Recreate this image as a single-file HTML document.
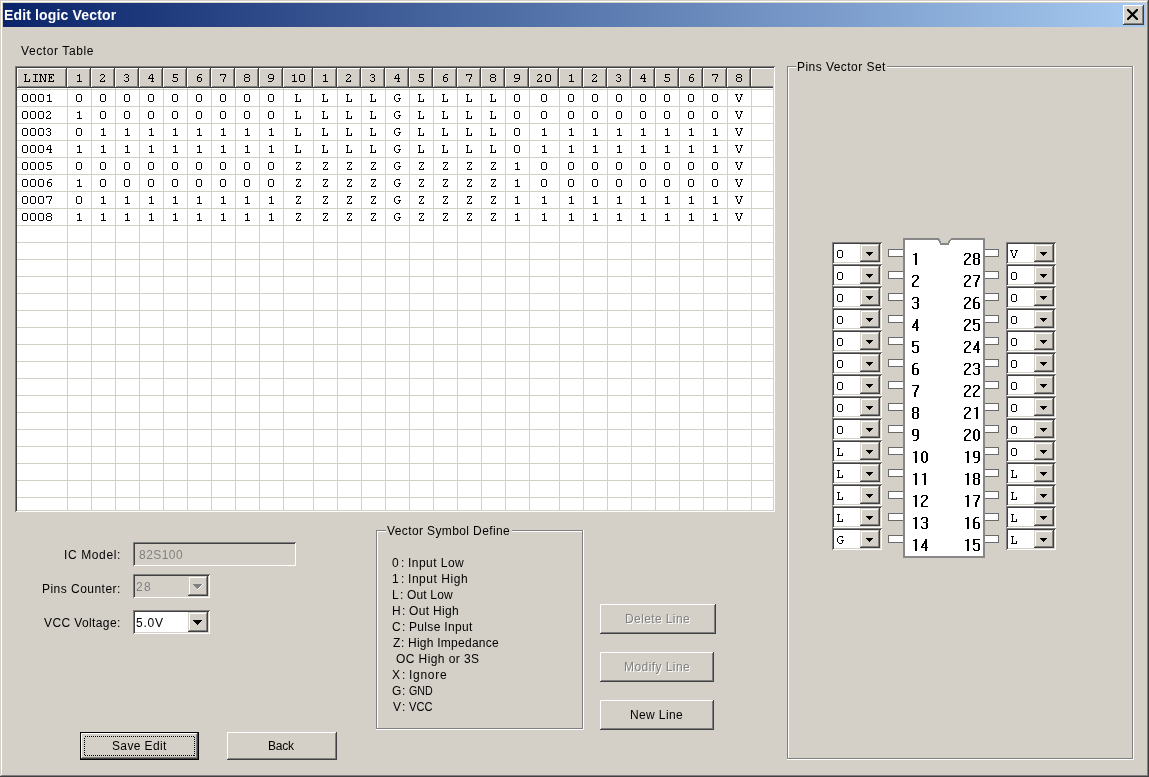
<!DOCTYPE html>
<html><head><meta charset="utf-8"><style>
html,body{margin:0;padding:0;}
body{width:1149px;height:777px;overflow:hidden;background:#D4D0C8;position:relative;font-family:"Liberation Sans",sans-serif;}
body div{position:absolute;}
.t{font-size:12px;line-height:15px;white-space:nowrap;color:#000;transform:translateZ(0);}
.tt{font-size:14px;font-weight:bold;color:#fff;line-height:20px;white-space:nowrap;letter-spacing:0.15px;transform:translateZ(0);}
.rz{background:#D4D0C8;box-shadow:inset -1px -1px #404040, inset 1px 1px #fff, inset -2px -2px #808080, inset 2px 2px #D4D0C8;}
.cb{background:#D4D0C8;box-shadow:inset -1px -1px #404040, inset 1px 1px #D4D0C8, inset -2px -2px #808080, inset 2px 2px #fff;}
.sk{box-shadow:inset 1px 1px #808080, inset -1px -1px #fff, inset 2px 2px #404040, inset -2px -2px #D4D0C8;}
.hd{background:#D4D0C8;box-shadow:inset -1px -1px #404040, inset 1px 1px #fff, inset -2px -2px #808080;}
</style></head><body>
<div style="left:0;top:0;width:1149px;height:777px;box-shadow:inset -1px -1px #404040, inset 1px 1px #D4D0C8, inset -2px -2px #808080, inset 2px 2px #fff"></div>
<div style="left:3px;top:3px;width:1143px;height:24px;background:linear-gradient(to right,#0A246A,#A6CAF0)"></div>
<div class="tt" style="left:4px;top:5px">Edit logic Vector</div>
<div class="rz" style="left:1123px;top:5px;width:21px;height:20px"></div>
<svg style="position:absolute;left:1127px;top:9px" width="11" height="11"><path d="M1 1L10 10M10 1L1 10" stroke="#000" stroke-width="2.2" stroke-linecap="square"/></svg>
<div class="t" style="left:21px;top:44px;letter-spacing:0.603px;color:#000;">Vector Table</div>
<div class="sk" style="left:15px;top:66px;width:760px;height:446px;background:#fff"></div>
<div class="hd" style="left:17px;top:68px;width:50px;height:20px"></div>
<div class="hd" style="left:67px;top:68px;width:24px;height:20px"></div>
<div class="hd" style="left:91px;top:68px;width:24px;height:20px"></div>
<div class="hd" style="left:115px;top:68px;width:24px;height:20px"></div>
<div class="hd" style="left:139px;top:68px;width:24px;height:20px"></div>
<div class="hd" style="left:163px;top:68px;width:24px;height:20px"></div>
<div class="hd" style="left:187px;top:68px;width:24px;height:20px"></div>
<div class="hd" style="left:211px;top:68px;width:24px;height:20px"></div>
<div class="hd" style="left:235px;top:68px;width:24px;height:20px"></div>
<div class="hd" style="left:259px;top:68px;width:24px;height:20px"></div>
<div class="hd" style="left:283px;top:68px;width:30px;height:20px"></div>
<div class="hd" style="left:313px;top:68px;width:24px;height:20px"></div>
<div class="hd" style="left:337px;top:68px;width:24px;height:20px"></div>
<div class="hd" style="left:361px;top:68px;width:24px;height:20px"></div>
<div class="hd" style="left:385px;top:68px;width:24px;height:20px"></div>
<div class="hd" style="left:409px;top:68px;width:24px;height:20px"></div>
<div class="hd" style="left:433px;top:68px;width:24px;height:20px"></div>
<div class="hd" style="left:457px;top:68px;width:24px;height:20px"></div>
<div class="hd" style="left:481px;top:68px;width:24px;height:20px"></div>
<div class="hd" style="left:505px;top:68px;width:24px;height:20px"></div>
<div class="hd" style="left:529px;top:68px;width:30px;height:20px"></div>
<div class="hd" style="left:559px;top:68px;width:24px;height:20px"></div>
<div class="hd" style="left:583px;top:68px;width:24px;height:20px"></div>
<div class="hd" style="left:607px;top:68px;width:24px;height:20px"></div>
<div class="hd" style="left:631px;top:68px;width:24px;height:20px"></div>
<div class="hd" style="left:655px;top:68px;width:24px;height:20px"></div>
<div class="hd" style="left:679px;top:68px;width:24px;height:20px"></div>
<div class="hd" style="left:703px;top:68px;width:24px;height:20px"></div>
<div class="hd" style="left:727px;top:68px;width:24px;height:20px"></div>
<div style="left:751px;top:68px;width:22px;height:20px;background:#D4D0C8;box-shadow:inset 0 -1px #404040, inset 0 -2px #808080, inset 1px 1px #fff"></div>
<div style="left:17px;top:89px;width:756px;height:1px;background:#D4D0C8;"></div>
<div style="left:17px;top:106px;width:756px;height:1px;background:#D4D0C8;"></div>
<div style="left:17px;top:123px;width:756px;height:1px;background:#D4D0C8;"></div>
<div style="left:17px;top:140px;width:756px;height:1px;background:#D4D0C8;"></div>
<div style="left:17px;top:157px;width:756px;height:1px;background:#D4D0C8;"></div>
<div style="left:17px;top:174px;width:756px;height:1px;background:#D4D0C8;"></div>
<div style="left:17px;top:191px;width:756px;height:1px;background:#D4D0C8;"></div>
<div style="left:17px;top:208px;width:756px;height:1px;background:#D4D0C8;"></div>
<div style="left:17px;top:225px;width:756px;height:1px;background:#D4D0C8;"></div>
<div style="left:17px;top:242px;width:756px;height:1px;background:#D4D0C8;"></div>
<div style="left:17px;top:259px;width:756px;height:1px;background:#D4D0C8;"></div>
<div style="left:17px;top:276px;width:756px;height:1px;background:#D4D0C8;"></div>
<div style="left:17px;top:293px;width:756px;height:1px;background:#D4D0C8;"></div>
<div style="left:17px;top:310px;width:756px;height:1px;background:#D4D0C8;"></div>
<div style="left:17px;top:327px;width:756px;height:1px;background:#D4D0C8;"></div>
<div style="left:17px;top:344px;width:756px;height:1px;background:#D4D0C8;"></div>
<div style="left:17px;top:361px;width:756px;height:1px;background:#D4D0C8;"></div>
<div style="left:17px;top:378px;width:756px;height:1px;background:#D4D0C8;"></div>
<div style="left:17px;top:395px;width:756px;height:1px;background:#D4D0C8;"></div>
<div style="left:17px;top:412px;width:756px;height:1px;background:#D4D0C8;"></div>
<div style="left:17px;top:429px;width:756px;height:1px;background:#D4D0C8;"></div>
<div style="left:17px;top:446px;width:756px;height:1px;background:#D4D0C8;"></div>
<div style="left:17px;top:463px;width:756px;height:1px;background:#D4D0C8;"></div>
<div style="left:17px;top:480px;width:756px;height:1px;background:#D4D0C8;"></div>
<div style="left:17px;top:497px;width:756px;height:1px;background:#D4D0C8;"></div>
<div style="left:67px;top:88px;width:1px;height:422px;background:#D4D0C8;"></div>
<div style="left:91px;top:88px;width:1px;height:422px;background:#D4D0C8;"></div>
<div style="left:115px;top:88px;width:1px;height:422px;background:#D4D0C8;"></div>
<div style="left:139px;top:88px;width:1px;height:422px;background:#D4D0C8;"></div>
<div style="left:163px;top:88px;width:1px;height:422px;background:#D4D0C8;"></div>
<div style="left:187px;top:88px;width:1px;height:422px;background:#D4D0C8;"></div>
<div style="left:211px;top:88px;width:1px;height:422px;background:#D4D0C8;"></div>
<div style="left:235px;top:88px;width:1px;height:422px;background:#D4D0C8;"></div>
<div style="left:259px;top:88px;width:1px;height:422px;background:#D4D0C8;"></div>
<div style="left:283px;top:88px;width:1px;height:422px;background:#D4D0C8;"></div>
<div style="left:313px;top:88px;width:1px;height:422px;background:#D4D0C8;"></div>
<div style="left:337px;top:88px;width:1px;height:422px;background:#D4D0C8;"></div>
<div style="left:361px;top:88px;width:1px;height:422px;background:#D4D0C8;"></div>
<div style="left:385px;top:88px;width:1px;height:422px;background:#D4D0C8;"></div>
<div style="left:409px;top:88px;width:1px;height:422px;background:#D4D0C8;"></div>
<div style="left:433px;top:88px;width:1px;height:422px;background:#D4D0C8;"></div>
<div style="left:457px;top:88px;width:1px;height:422px;background:#D4D0C8;"></div>
<div style="left:481px;top:88px;width:1px;height:422px;background:#D4D0C8;"></div>
<div style="left:505px;top:88px;width:1px;height:422px;background:#D4D0C8;"></div>
<div style="left:529px;top:88px;width:1px;height:422px;background:#D4D0C8;"></div>
<div style="left:559px;top:88px;width:1px;height:422px;background:#D4D0C8;"></div>
<div style="left:583px;top:88px;width:1px;height:422px;background:#D4D0C8;"></div>
<div style="left:607px;top:88px;width:1px;height:422px;background:#D4D0C8;"></div>
<div style="left:631px;top:88px;width:1px;height:422px;background:#D4D0C8;"></div>
<div style="left:655px;top:88px;width:1px;height:422px;background:#D4D0C8;"></div>
<div style="left:679px;top:88px;width:1px;height:422px;background:#D4D0C8;"></div>
<div style="left:703px;top:88px;width:1px;height:422px;background:#D4D0C8;"></div>
<div style="left:727px;top:88px;width:1px;height:422px;background:#D4D0C8;"></div>
<div style="left:751px;top:88px;width:1px;height:422px;background:#D4D0C8;"></div>
<div class="t" style="left:64px;top:548px;letter-spacing:0.623px;color:#000;">IC Model:</div>
<div class="t" style="left:42px;top:582px;letter-spacing:0.47px;color:#000;">Pins Counter:</div>
<div class="t" style="left:44px;top:616px;letter-spacing:0.39px;color:#000;">VCC Voltage:</div>
<div class="sk" style="left:133px;top:542px;width:163px;height:24px;background:#D4D0C8"></div>
<div class="t" style="left:139px;top:548px;letter-spacing:0.46px;color:#808080;">82S100</div>
<div class="sk" style="left:133px;top:574px;width:77px;height:24px;background:#D4D0C8"></div>
<div class="cb" style="left:188px;top:576px;width:20px;height:20px"></div>
<svg style="position:absolute;left:193px;top:584px" width="10" height="6" shape-rendering="crispEdges"><path d="M9 0h1v1h-1zM8 1h1v1h-1zM7 2h1v1h-1zM6 3h1v1h-1zM5 4h1v1h-1zM4 5h1v1h-1z" fill="#fff"/></svg>
<svg style="position:absolute;left:193px;top:584px" width="9" height="5" shape-rendering="crispEdges"><path d="M0 0h9v1h-9zM1 1h7v1h-7zM2 2h5v1h-5zM3 3h3v1h-3zM4 4h1v1h-1z" fill="#808080"/></svg>
<div class="t" style="left:136px;top:580px;letter-spacing:1.326px;color:#808080;">28</div>
<div class="sk" style="left:133px;top:610px;width:77px;height:24px;background:#fff"></div>
<div class="cb" style="left:188px;top:612px;width:20px;height:20px"></div>
<svg style="position:absolute;left:193px;top:620px" width="9" height="5" shape-rendering="crispEdges"><path d="M0 0h9v1h-9zM1 1h7v1h-7zM2 2h5v1h-5zM3 3h3v1h-3zM4 4h1v1h-1z" fill="#000"/></svg>
<div class="t" style="left:136px;top:616px;letter-spacing:0.772px;color:#000;">5.0V</div>
<div style="left:376px;top:530px;width:208px;height:200px;box-shadow:inset -1px -1px #fff, inset 1px 1px #808080, inset -2px -2px #808080, inset 2px 2px #fff"></div>
<div style="left:386px;top:526px;width:126px;height:10px;background:#D4D0C8"></div>
<div class="t" style="left:387px;top:524px;letter-spacing:0.384px;color:#000;">Vector Symbol Define</div>
<div class="t" style="left:392px;top:556px;letter-spacing:0px;color:#000;">0</div>
<div class="t" style="left:401px;top:556px;letter-spacing:0px;color:#000;">:</div>
<div class="t" style="left:408px;top:556px;letter-spacing:0.454px;color:#000;">Input Low</div>
<div class="t" style="left:392px;top:572px;letter-spacing:0px;color:#000;">1</div>
<div class="t" style="left:401px;top:572px;letter-spacing:0px;color:#000;">:</div>
<div class="t" style="left:408px;top:572px;letter-spacing:0.552px;color:#000;">Input High</div>
<div class="t" style="left:392px;top:588px;letter-spacing:0px;color:#000;">L</div>
<div class="t" style="left:400px;top:588px;letter-spacing:0px;color:#000;">:</div>
<div class="t" style="left:407px;top:588px;letter-spacing:0.163px;color:#000;">Out Low</div>
<div class="t" style="left:392px;top:604px;letter-spacing:0px;color:#000;">H</div>
<div class="t" style="left:402px;top:604px;letter-spacing:0px;color:#000;">:</div>
<div class="t" style="left:409px;top:604px;letter-spacing:0.331px;color:#000;">Out High</div>
<div class="t" style="left:392px;top:620px;letter-spacing:0px;color:#000;">C</div>
<div class="t" style="left:402px;top:620px;letter-spacing:0px;color:#000;">:</div>
<div class="t" style="left:409px;top:620px;letter-spacing:0.329px;color:#000;">Pulse Input</div>
<div class="t" style="left:393px;top:636px;letter-spacing:0px;color:#000;">Z</div>
<div class="t" style="left:401px;top:636px;letter-spacing:0px;color:#000;">:</div>
<div class="t" style="left:408px;top:636px;letter-spacing:0.253px;color:#000;">High Impedance</div>
<div class="t" style="left:396px;top:652px;letter-spacing:0.415px;color:#000;">OC High or 3S</div>
<div class="t" style="left:392px;top:668px;letter-spacing:0px;color:#000;">X</div>
<div class="t" style="left:402px;top:668px;letter-spacing:0px;color:#000;">:</div>
<div class="t" style="left:409px;top:668px;letter-spacing:0.73px;color:#000;">Ignore</div>
<div class="t" style="left:392px;top:684px;letter-spacing:0px;color:#000;">G</div>
<div class="t" style="left:402px;top:684px;letter-spacing:0px;color:#000;">:</div>
<div class="t" style="left:409px;top:684px;letter-spacing:0px;color:#000;transform:translateZ(0) scaleX(0.889);transform-origin:0 0">GND</div>
<div class="t" style="left:393px;top:700px;letter-spacing:0px;color:#000;">V</div>
<div class="t" style="left:402px;top:700px;letter-spacing:0px;color:#000;">:</div>
<div class="t" style="left:409px;top:700px;letter-spacing:0px;color:#000;transform:translateZ(0) scaleX(0.927);transform-origin:0 0">VCC</div>
<div class="rz" style="left:600px;top:604px;width:116px;height:30px"></div>
<div class="t" style="left:626px;top:613px;letter-spacing:0.396px;color:#fff;">Delete Line</div>
<div class="t" style="left:625px;top:612px;letter-spacing:0.396px;color:#808080;">Delete Line</div>
<div class="rz" style="left:600px;top:652px;width:114px;height:30px"></div>
<div class="t" style="left:625px;top:661px;letter-spacing:0.431px;color:#fff;">Modify Line</div>
<div class="t" style="left:624px;top:660px;letter-spacing:0.431px;color:#808080;">Modify Line</div>
<div class="rz" style="left:600px;top:700px;width:114px;height:30px"></div>
<div class="t" style="left:630px;top:708px;letter-spacing:0.378px;color:#000;">New Line</div>
<div style="left:80px;top:732px;width:119px;height:28px;background:#D4D0C8;box-shadow:inset -1px -1px #000, inset 1px 1px #000, inset -2px -2px #404040, inset 2px 2px #fff, inset -3px -3px #808080"></div>
<svg style="position:absolute;left:84px;top:736px" width="111" height="20" shape-rendering="crispEdges"><rect x="0.5" y="0.5" width="110" height="19" fill="none" stroke="#000" stroke-dasharray="1 1"/></svg>
<div class="t" style="left:112px;top:739px;letter-spacing:0.371px;color:#000;">Save Edit</div>
<div class="rz" style="left:227px;top:732px;width:110px;height:28px"></div>
<div class="t" style="left:268px;top:739px;letter-spacing:-0.226px;color:#000;">Back</div>
<div style="left:787px;top:66px;width:347px;height:694px;box-shadow:inset -1px -1px #fff, inset 1px 1px #808080, inset -2px -2px #808080, inset 2px 2px #fff"></div>
<div style="left:796px;top:62px;width:91px;height:10px;background:#D4D0C8"></div>
<div class="t" style="left:797px;top:60px;letter-spacing:0.45px;color:#000;">Pins Vector Set</div>
<div class="sk" style="left:832px;top:242px;width:50px;height:22px;background:#fff"></div>
<div class="cb" style="left:860px;top:244px;width:20px;height:18px"></div>
<svg style="position:absolute;left:866px;top:252px" width="7" height="4" shape-rendering="crispEdges"><path d="M0 0h7v1h-7zM1 1h5v1h-5zM2 2h3v1h-3zM3 3h1v1h-1z" fill="#000"/></svg>
<div class="sk" style="left:1006px;top:242px;width:50px;height:22px;background:#fff"></div>
<div class="cb" style="left:1034px;top:244px;width:20px;height:18px"></div>
<svg style="position:absolute;left:1040px;top:252px" width="7" height="4" shape-rendering="crispEdges"><path d="M0 0h7v1h-7zM1 1h5v1h-5zM2 2h3v1h-3zM3 3h1v1h-1z" fill="#000"/></svg>
<div class="sk" style="left:832px;top:264px;width:50px;height:22px;background:#fff"></div>
<div class="cb" style="left:860px;top:266px;width:20px;height:18px"></div>
<svg style="position:absolute;left:866px;top:274px" width="7" height="4" shape-rendering="crispEdges"><path d="M0 0h7v1h-7zM1 1h5v1h-5zM2 2h3v1h-3zM3 3h1v1h-1z" fill="#000"/></svg>
<div class="sk" style="left:1006px;top:264px;width:50px;height:22px;background:#fff"></div>
<div class="cb" style="left:1034px;top:266px;width:20px;height:18px"></div>
<svg style="position:absolute;left:1040px;top:274px" width="7" height="4" shape-rendering="crispEdges"><path d="M0 0h7v1h-7zM1 1h5v1h-5zM2 2h3v1h-3zM3 3h1v1h-1z" fill="#000"/></svg>
<div class="sk" style="left:832px;top:286px;width:50px;height:22px;background:#fff"></div>
<div class="cb" style="left:860px;top:288px;width:20px;height:18px"></div>
<svg style="position:absolute;left:866px;top:296px" width="7" height="4" shape-rendering="crispEdges"><path d="M0 0h7v1h-7zM1 1h5v1h-5zM2 2h3v1h-3zM3 3h1v1h-1z" fill="#000"/></svg>
<div class="sk" style="left:1006px;top:286px;width:50px;height:22px;background:#fff"></div>
<div class="cb" style="left:1034px;top:288px;width:20px;height:18px"></div>
<svg style="position:absolute;left:1040px;top:296px" width="7" height="4" shape-rendering="crispEdges"><path d="M0 0h7v1h-7zM1 1h5v1h-5zM2 2h3v1h-3zM3 3h1v1h-1z" fill="#000"/></svg>
<div class="sk" style="left:832px;top:308px;width:50px;height:22px;background:#fff"></div>
<div class="cb" style="left:860px;top:310px;width:20px;height:18px"></div>
<svg style="position:absolute;left:866px;top:318px" width="7" height="4" shape-rendering="crispEdges"><path d="M0 0h7v1h-7zM1 1h5v1h-5zM2 2h3v1h-3zM3 3h1v1h-1z" fill="#000"/></svg>
<div class="sk" style="left:1006px;top:308px;width:50px;height:22px;background:#fff"></div>
<div class="cb" style="left:1034px;top:310px;width:20px;height:18px"></div>
<svg style="position:absolute;left:1040px;top:318px" width="7" height="4" shape-rendering="crispEdges"><path d="M0 0h7v1h-7zM1 1h5v1h-5zM2 2h3v1h-3zM3 3h1v1h-1z" fill="#000"/></svg>
<div class="sk" style="left:832px;top:330px;width:50px;height:22px;background:#fff"></div>
<div class="cb" style="left:860px;top:332px;width:20px;height:18px"></div>
<svg style="position:absolute;left:866px;top:340px" width="7" height="4" shape-rendering="crispEdges"><path d="M0 0h7v1h-7zM1 1h5v1h-5zM2 2h3v1h-3zM3 3h1v1h-1z" fill="#000"/></svg>
<div class="sk" style="left:1006px;top:330px;width:50px;height:22px;background:#fff"></div>
<div class="cb" style="left:1034px;top:332px;width:20px;height:18px"></div>
<svg style="position:absolute;left:1040px;top:340px" width="7" height="4" shape-rendering="crispEdges"><path d="M0 0h7v1h-7zM1 1h5v1h-5zM2 2h3v1h-3zM3 3h1v1h-1z" fill="#000"/></svg>
<div class="sk" style="left:832px;top:352px;width:50px;height:22px;background:#fff"></div>
<div class="cb" style="left:860px;top:354px;width:20px;height:18px"></div>
<svg style="position:absolute;left:866px;top:362px" width="7" height="4" shape-rendering="crispEdges"><path d="M0 0h7v1h-7zM1 1h5v1h-5zM2 2h3v1h-3zM3 3h1v1h-1z" fill="#000"/></svg>
<div class="sk" style="left:1006px;top:352px;width:50px;height:22px;background:#fff"></div>
<div class="cb" style="left:1034px;top:354px;width:20px;height:18px"></div>
<svg style="position:absolute;left:1040px;top:362px" width="7" height="4" shape-rendering="crispEdges"><path d="M0 0h7v1h-7zM1 1h5v1h-5zM2 2h3v1h-3zM3 3h1v1h-1z" fill="#000"/></svg>
<div class="sk" style="left:832px;top:374px;width:50px;height:22px;background:#fff"></div>
<div class="cb" style="left:860px;top:376px;width:20px;height:18px"></div>
<svg style="position:absolute;left:866px;top:384px" width="7" height="4" shape-rendering="crispEdges"><path d="M0 0h7v1h-7zM1 1h5v1h-5zM2 2h3v1h-3zM3 3h1v1h-1z" fill="#000"/></svg>
<div class="sk" style="left:1006px;top:374px;width:50px;height:22px;background:#fff"></div>
<div class="cb" style="left:1034px;top:376px;width:20px;height:18px"></div>
<svg style="position:absolute;left:1040px;top:384px" width="7" height="4" shape-rendering="crispEdges"><path d="M0 0h7v1h-7zM1 1h5v1h-5zM2 2h3v1h-3zM3 3h1v1h-1z" fill="#000"/></svg>
<div class="sk" style="left:832px;top:396px;width:50px;height:22px;background:#fff"></div>
<div class="cb" style="left:860px;top:398px;width:20px;height:18px"></div>
<svg style="position:absolute;left:866px;top:406px" width="7" height="4" shape-rendering="crispEdges"><path d="M0 0h7v1h-7zM1 1h5v1h-5zM2 2h3v1h-3zM3 3h1v1h-1z" fill="#000"/></svg>
<div class="sk" style="left:1006px;top:396px;width:50px;height:22px;background:#fff"></div>
<div class="cb" style="left:1034px;top:398px;width:20px;height:18px"></div>
<svg style="position:absolute;left:1040px;top:406px" width="7" height="4" shape-rendering="crispEdges"><path d="M0 0h7v1h-7zM1 1h5v1h-5zM2 2h3v1h-3zM3 3h1v1h-1z" fill="#000"/></svg>
<div class="sk" style="left:832px;top:418px;width:50px;height:22px;background:#fff"></div>
<div class="cb" style="left:860px;top:420px;width:20px;height:18px"></div>
<svg style="position:absolute;left:866px;top:428px" width="7" height="4" shape-rendering="crispEdges"><path d="M0 0h7v1h-7zM1 1h5v1h-5zM2 2h3v1h-3zM3 3h1v1h-1z" fill="#000"/></svg>
<div class="sk" style="left:1006px;top:418px;width:50px;height:22px;background:#fff"></div>
<div class="cb" style="left:1034px;top:420px;width:20px;height:18px"></div>
<svg style="position:absolute;left:1040px;top:428px" width="7" height="4" shape-rendering="crispEdges"><path d="M0 0h7v1h-7zM1 1h5v1h-5zM2 2h3v1h-3zM3 3h1v1h-1z" fill="#000"/></svg>
<div class="sk" style="left:832px;top:440px;width:50px;height:22px;background:#fff"></div>
<div class="cb" style="left:860px;top:442px;width:20px;height:18px"></div>
<svg style="position:absolute;left:866px;top:450px" width="7" height="4" shape-rendering="crispEdges"><path d="M0 0h7v1h-7zM1 1h5v1h-5zM2 2h3v1h-3zM3 3h1v1h-1z" fill="#000"/></svg>
<div class="sk" style="left:1006px;top:440px;width:50px;height:22px;background:#fff"></div>
<div class="cb" style="left:1034px;top:442px;width:20px;height:18px"></div>
<svg style="position:absolute;left:1040px;top:450px" width="7" height="4" shape-rendering="crispEdges"><path d="M0 0h7v1h-7zM1 1h5v1h-5zM2 2h3v1h-3zM3 3h1v1h-1z" fill="#000"/></svg>
<div class="sk" style="left:832px;top:462px;width:50px;height:22px;background:#fff"></div>
<div class="cb" style="left:860px;top:464px;width:20px;height:18px"></div>
<svg style="position:absolute;left:866px;top:472px" width="7" height="4" shape-rendering="crispEdges"><path d="M0 0h7v1h-7zM1 1h5v1h-5zM2 2h3v1h-3zM3 3h1v1h-1z" fill="#000"/></svg>
<div class="sk" style="left:1006px;top:462px;width:50px;height:22px;background:#fff"></div>
<div class="cb" style="left:1034px;top:464px;width:20px;height:18px"></div>
<svg style="position:absolute;left:1040px;top:472px" width="7" height="4" shape-rendering="crispEdges"><path d="M0 0h7v1h-7zM1 1h5v1h-5zM2 2h3v1h-3zM3 3h1v1h-1z" fill="#000"/></svg>
<div class="sk" style="left:832px;top:484px;width:50px;height:22px;background:#fff"></div>
<div class="cb" style="left:860px;top:486px;width:20px;height:18px"></div>
<svg style="position:absolute;left:866px;top:494px" width="7" height="4" shape-rendering="crispEdges"><path d="M0 0h7v1h-7zM1 1h5v1h-5zM2 2h3v1h-3zM3 3h1v1h-1z" fill="#000"/></svg>
<div class="sk" style="left:1006px;top:484px;width:50px;height:22px;background:#fff"></div>
<div class="cb" style="left:1034px;top:486px;width:20px;height:18px"></div>
<svg style="position:absolute;left:1040px;top:494px" width="7" height="4" shape-rendering="crispEdges"><path d="M0 0h7v1h-7zM1 1h5v1h-5zM2 2h3v1h-3zM3 3h1v1h-1z" fill="#000"/></svg>
<div class="sk" style="left:832px;top:506px;width:50px;height:22px;background:#fff"></div>
<div class="cb" style="left:860px;top:508px;width:20px;height:18px"></div>
<svg style="position:absolute;left:866px;top:516px" width="7" height="4" shape-rendering="crispEdges"><path d="M0 0h7v1h-7zM1 1h5v1h-5zM2 2h3v1h-3zM3 3h1v1h-1z" fill="#000"/></svg>
<div class="sk" style="left:1006px;top:506px;width:50px;height:22px;background:#fff"></div>
<div class="cb" style="left:1034px;top:508px;width:20px;height:18px"></div>
<svg style="position:absolute;left:1040px;top:516px" width="7" height="4" shape-rendering="crispEdges"><path d="M0 0h7v1h-7zM1 1h5v1h-5zM2 2h3v1h-3zM3 3h1v1h-1z" fill="#000"/></svg>
<div class="sk" style="left:832px;top:528px;width:50px;height:22px;background:#fff"></div>
<div class="cb" style="left:860px;top:530px;width:20px;height:18px"></div>
<svg style="position:absolute;left:866px;top:538px" width="7" height="4" shape-rendering="crispEdges"><path d="M0 0h7v1h-7zM1 1h5v1h-5zM2 2h3v1h-3zM3 3h1v1h-1z" fill="#000"/></svg>
<div class="sk" style="left:1006px;top:528px;width:50px;height:22px;background:#fff"></div>
<div class="cb" style="left:1034px;top:530px;width:20px;height:18px"></div>
<svg style="position:absolute;left:1040px;top:538px" width="7" height="4" shape-rendering="crispEdges"><path d="M0 0h7v1h-7zM1 1h5v1h-5zM2 2h3v1h-3zM3 3h1v1h-1z" fill="#000"/></svg>
<svg style="position:absolute;left:0;top:0" width="1149" height="777" shape-rendering="crispEdges"><rect x="903" y="238" width="82" height="320" fill="#878787"/><rect x="905" y="240" width="78" height="316" fill="#fff"/><rect x="939" y="238" width="12" height="1" fill="#D4D0C8"/><rect x="939" y="239" width="1" height="1" fill="#878787"/><rect x="940" y="239" width="10" height="1" fill="#D4D0C8"/><rect x="950" y="239" width="1" height="1" fill="#878787"/><rect x="938" y="240" width="2" height="1" fill="#878787"/><rect x="940" y="240" width="9" height="1" fill="#D4D0C8"/><rect x="949" y="240" width="2" height="1" fill="#878787"/><rect x="939" y="241" width="2" height="1" fill="#878787"/><rect x="941" y="241" width="7" height="1" fill="#D4D0C8"/><rect x="948" y="241" width="2" height="1" fill="#878787"/><rect x="939" y="242" width="2" height="1" fill="#878787"/><rect x="941" y="242" width="7" height="1" fill="#D4D0C8"/><rect x="948" y="242" width="2" height="1" fill="#878787"/><rect x="940" y="243" width="9" height="1" fill="#878787"/><rect x="940" y="244" width="9" height="1" fill="#878787"/><rect x="888" y="249" width="15" height="8" fill="#6a6a6a"/><rect x="889" y="250" width="14" height="6" fill="#fff"/><rect x="985" y="249" width="14" height="8" fill="#6a6a6a"/><rect x="985" y="250" width="13" height="6" fill="#fff"/><rect x="888" y="271" width="15" height="8" fill="#6a6a6a"/><rect x="889" y="272" width="14" height="6" fill="#fff"/><rect x="985" y="271" width="14" height="8" fill="#6a6a6a"/><rect x="985" y="272" width="13" height="6" fill="#fff"/><rect x="888" y="293" width="15" height="8" fill="#6a6a6a"/><rect x="889" y="294" width="14" height="6" fill="#fff"/><rect x="985" y="293" width="14" height="8" fill="#6a6a6a"/><rect x="985" y="294" width="13" height="6" fill="#fff"/><rect x="888" y="315" width="15" height="8" fill="#6a6a6a"/><rect x="889" y="316" width="14" height="6" fill="#fff"/><rect x="985" y="315" width="14" height="8" fill="#6a6a6a"/><rect x="985" y="316" width="13" height="6" fill="#fff"/><rect x="888" y="337" width="15" height="8" fill="#6a6a6a"/><rect x="889" y="338" width="14" height="6" fill="#fff"/><rect x="985" y="337" width="14" height="8" fill="#6a6a6a"/><rect x="985" y="338" width="13" height="6" fill="#fff"/><rect x="888" y="359" width="15" height="8" fill="#6a6a6a"/><rect x="889" y="360" width="14" height="6" fill="#fff"/><rect x="985" y="359" width="14" height="8" fill="#6a6a6a"/><rect x="985" y="360" width="13" height="6" fill="#fff"/><rect x="888" y="381" width="15" height="8" fill="#6a6a6a"/><rect x="889" y="382" width="14" height="6" fill="#fff"/><rect x="985" y="381" width="14" height="8" fill="#6a6a6a"/><rect x="985" y="382" width="13" height="6" fill="#fff"/><rect x="888" y="403" width="15" height="8" fill="#6a6a6a"/><rect x="889" y="404" width="14" height="6" fill="#fff"/><rect x="985" y="403" width="14" height="8" fill="#6a6a6a"/><rect x="985" y="404" width="13" height="6" fill="#fff"/><rect x="888" y="425" width="15" height="8" fill="#6a6a6a"/><rect x="889" y="426" width="14" height="6" fill="#fff"/><rect x="985" y="425" width="14" height="8" fill="#6a6a6a"/><rect x="985" y="426" width="13" height="6" fill="#fff"/><rect x="888" y="447" width="15" height="8" fill="#6a6a6a"/><rect x="889" y="448" width="14" height="6" fill="#fff"/><rect x="985" y="447" width="14" height="8" fill="#6a6a6a"/><rect x="985" y="448" width="13" height="6" fill="#fff"/><rect x="888" y="469" width="15" height="8" fill="#6a6a6a"/><rect x="889" y="470" width="14" height="6" fill="#fff"/><rect x="985" y="469" width="14" height="8" fill="#6a6a6a"/><rect x="985" y="470" width="13" height="6" fill="#fff"/><rect x="888" y="491" width="15" height="8" fill="#6a6a6a"/><rect x="889" y="492" width="14" height="6" fill="#fff"/><rect x="985" y="491" width="14" height="8" fill="#6a6a6a"/><rect x="985" y="492" width="13" height="6" fill="#fff"/><rect x="888" y="513" width="15" height="8" fill="#6a6a6a"/><rect x="889" y="514" width="14" height="6" fill="#fff"/><rect x="985" y="513" width="14" height="8" fill="#6a6a6a"/><rect x="985" y="514" width="13" height="6" fill="#fff"/><rect x="888" y="535" width="15" height="8" fill="#6a6a6a"/><rect x="889" y="536" width="14" height="6" fill="#fff"/><rect x="985" y="535" width="14" height="8" fill="#6a6a6a"/><rect x="985" y="536" width="13" height="6" fill="#fff"/></svg>
<svg style="position:absolute;left:0;top:0" width="1149" height="777" shape-rendering="crispEdges"><defs><path id="g0" d="M1 0h4v1h-4zM0 1h1v1h-1zM5 1h1v1h-1zM0 2h1v1h-1zM5 2h1v1h-1zM0 3h1v1h-1zM5 3h1v1h-1zM0 4h1v1h-1zM5 4h1v1h-1zM0 5h1v1h-1zM5 5h1v1h-1zM0 6h1v1h-1zM5 6h1v1h-1zM1 7h4v1h-4z"/><path id="g1" d="M2 0h1v1h-1zM0 1h3v1h-3zM2 2h1v1h-1zM2 3h1v1h-1zM2 4h1v1h-1zM2 5h1v1h-1zM2 6h1v1h-1zM0 7h5v1h-5z"/><path id="g2" d="M1 0h3v1h-3zM0 1h1v1h-1zM4 1h1v1h-1zM4 2h1v1h-1zM3 3h1v1h-1zM2 4h1v1h-1zM1 5h1v1h-1zM0 6h1v1h-1zM4 6h1v1h-1zM0 7h5v1h-5z"/><path id="g3" d="M1 0h3v1h-3zM0 1h1v1h-1zM4 1h1v1h-1zM4 2h1v1h-1zM2 3h2v1h-2zM4 4h1v1h-1zM4 5h1v1h-1zM0 6h1v1h-1zM4 6h1v1h-1zM1 7h3v1h-3z"/><path id="g4" d="M3 0h2v1h-2zM2 1h1v1h-1zM4 1h1v1h-1zM1 2h1v1h-1zM4 2h1v1h-1zM1 3h1v1h-1zM4 3h1v1h-1zM0 4h6v1h-6zM4 5h1v1h-1zM4 6h1v1h-1zM3 7h3v1h-3z"/><path id="g5" d="M1 0h5v1h-5zM1 1h1v1h-1zM1 2h1v1h-1zM1 3h4v1h-4zM5 4h1v1h-1zM5 5h1v1h-1zM0 6h1v1h-1zM5 6h1v1h-1zM1 7h4v1h-4z"/><path id="g6" d="M3 0h3v1h-3zM2 1h1v1h-1zM1 2h1v1h-1zM1 3h4v1h-4zM1 4h1v1h-1zM5 4h1v1h-1zM1 5h1v1h-1zM5 5h1v1h-1zM1 6h1v1h-1zM5 6h1v1h-1zM2 7h3v1h-3z"/><path id="g7" d="M0 0h6v1h-6zM0 1h1v1h-1zM5 1h1v1h-1zM5 2h1v1h-1zM4 3h1v1h-1zM4 4h1v1h-1zM3 5h1v1h-1zM3 6h1v1h-1zM3 7h1v1h-1z"/><path id="g8" d="M1 0h4v1h-4zM0 1h1v1h-1zM5 1h1v1h-1zM0 2h1v1h-1zM5 2h1v1h-1zM1 3h4v1h-4zM0 4h1v1h-1zM5 4h1v1h-1zM0 5h1v1h-1zM5 5h1v1h-1zM0 6h1v1h-1zM5 6h1v1h-1zM1 7h4v1h-4z"/><path id="g9" d="M1 0h4v1h-4zM0 1h1v1h-1zM5 1h1v1h-1zM0 2h1v1h-1zM5 2h1v1h-1zM0 3h1v1h-1zM5 3h1v1h-1zM1 4h5v1h-5zM5 5h1v1h-1zM4 6h1v1h-1zM0 7h4v1h-4z"/><path id="gL" d="M0 0h3v1h-3zM1 1h1v1h-1zM1 2h1v1h-1zM1 3h1v1h-1zM1 4h1v1h-1zM1 5h1v1h-1zM5 5h1v1h-1zM1 6h1v1h-1zM5 6h1v1h-1zM0 7h6v1h-6z"/><path id="gZ" d="M0 0h5v1h-5zM0 1h1v1h-1zM4 1h1v1h-1zM3 2h1v1h-1zM2 3h1v1h-1zM2 4h1v1h-1zM1 5h1v1h-1zM0 6h1v1h-1zM4 6h1v1h-1zM0 7h5v1h-5z"/><path id="gG" d="M2 0h4v1h-4zM1 1h1v1h-1zM5 1h1v1h-1zM0 2h1v1h-1zM0 3h1v1h-1zM0 4h1v1h-1zM4 4h3v1h-3zM0 5h1v1h-1zM5 5h1v1h-1zM1 6h1v1h-1zM5 6h1v1h-1zM2 7h3v1h-3z"/><path id="gV" d="M0 0h3v1h-3zM5 0h3v1h-3zM1 1h1v1h-1zM6 1h1v1h-1zM1 2h1v1h-1zM6 2h1v1h-1zM2 3h1v1h-1zM5 3h1v1h-1zM2 4h1v1h-1zM5 4h1v1h-1zM2 5h1v1h-1zM5 5h1v1h-1zM3 6h2v1h-2zM3 7h2v1h-2z"/><path id="s0" d="M2 0h3v1h-3zM1 1h2v1h-2zM4 1h2v1h-2zM0 2h2v1h-2zM5 2h2v1h-2zM0 3h2v1h-2zM5 3h2v1h-2zM0 4h2v1h-2zM5 4h2v1h-2zM0 5h2v1h-2zM5 5h2v1h-2zM0 6h2v1h-2zM5 6h2v1h-2zM0 7h2v1h-2zM5 7h2v1h-2zM0 8h2v1h-2zM5 8h2v1h-2zM0 9h2v1h-2zM5 9h2v1h-2zM1 10h2v1h-2zM4 10h2v1h-2zM2 11h3v1h-3z"/><path id="s1" d="M3 0h2v1h-2zM1 1h4v1h-4zM3 2h2v1h-2zM3 3h2v1h-2zM3 4h2v1h-2zM3 5h2v1h-2zM3 6h2v1h-2zM3 7h2v1h-2zM3 8h2v1h-2zM3 9h2v1h-2zM3 10h2v1h-2zM3 11h2v1h-2z"/><path id="s2" d="M1 0h5v1h-5zM0 1h2v1h-2zM5 1h2v1h-2zM0 2h1v1h-1zM5 2h2v1h-2zM5 3h2v1h-2zM4 4h2v1h-2zM3 5h2v1h-2zM2 6h2v1h-2zM1 7h2v1h-2zM0 8h2v1h-2zM0 9h2v1h-2zM0 10h2v1h-2zM0 11h7v1h-7z"/><path id="s3" d="M1 0h5v1h-5zM0 1h2v1h-2zM5 1h2v1h-2zM0 2h1v1h-1zM5 2h2v1h-2zM5 3h2v1h-2zM5 4h2v1h-2zM2 5h4v1h-4zM5 6h2v1h-2zM5 7h2v1h-2zM5 8h2v1h-2zM0 9h1v1h-1zM5 9h2v1h-2zM0 10h2v1h-2zM5 10h2v1h-2zM1 11h5v1h-5z"/><path id="s4" d="M4 0h2v1h-2zM4 1h2v1h-2zM3 2h3v1h-3zM3 3h3v1h-3zM2 4h4v1h-4zM1 5h2v1h-2zM4 5h2v1h-2zM1 6h2v1h-2zM4 6h2v1h-2zM0 7h2v1h-2zM4 7h2v1h-2zM0 8h7v1h-7zM4 9h2v1h-2zM4 10h2v1h-2zM4 11h2v1h-2z"/><path id="s5" d="M0 0h7v1h-7zM0 1h2v1h-2zM0 2h2v1h-2zM0 3h2v1h-2zM0 4h6v1h-6zM0 5h2v1h-2zM5 5h2v1h-2zM5 6h2v1h-2zM5 7h2v1h-2zM5 8h2v1h-2zM0 9h1v1h-1zM5 9h2v1h-2zM0 10h2v1h-2zM5 10h2v1h-2zM1 11h5v1h-5z"/><path id="s6" d="M2 0h4v1h-4zM1 1h2v1h-2zM0 2h2v1h-2zM0 3h2v1h-2zM0 4h2v1h-2zM0 5h6v1h-6zM0 6h2v1h-2zM5 6h2v1h-2zM0 7h2v1h-2zM5 7h2v1h-2zM0 8h2v1h-2zM5 8h2v1h-2zM0 9h2v1h-2zM5 9h2v1h-2zM0 10h2v1h-2zM5 10h2v1h-2zM1 11h5v1h-5z"/><path id="s7" d="M0 0h7v1h-7zM5 1h2v1h-2zM5 2h2v1h-2zM4 3h2v1h-2zM4 4h2v1h-2zM3 5h2v1h-2zM3 6h2v1h-2zM2 7h2v1h-2zM2 8h2v1h-2zM2 9h2v1h-2zM2 10h2v1h-2zM2 11h2v1h-2z"/><path id="s8" d="M1 0h5v1h-5zM0 1h2v1h-2zM5 1h2v1h-2zM0 2h2v1h-2zM5 2h2v1h-2zM0 3h2v1h-2zM5 3h2v1h-2zM0 4h2v1h-2zM5 4h2v1h-2zM1 5h5v1h-5zM0 6h2v1h-2zM5 6h2v1h-2zM0 7h2v1h-2zM5 7h2v1h-2zM0 8h2v1h-2zM5 8h2v1h-2zM0 9h2v1h-2zM5 9h2v1h-2zM0 10h2v1h-2zM5 10h2v1h-2zM1 11h5v1h-5z"/><path id="s9" d="M1 0h5v1h-5zM0 1h2v1h-2zM5 1h2v1h-2zM0 2h2v1h-2zM5 2h2v1h-2zM0 3h2v1h-2zM5 3h2v1h-2zM0 4h2v1h-2zM5 4h2v1h-2zM0 5h2v1h-2zM5 5h2v1h-2zM1 6h6v1h-6zM5 7h2v1h-2zM5 8h2v1h-2zM5 9h2v1h-2zM4 10h2v1h-2zM1 11h4v1h-4z"/></defs><g fill="#000"><path transform="translate(24,74)" d="M0 0h3v1h-3zM1 1h1v1h-1zM1 2h1v1h-1zM1 3h1v1h-1zM1 4h1v1h-1zM1 5h1v1h-1zM5 5h1v1h-1zM1 6h1v1h-1zM5 6h1v1h-1zM0 7h6v1h-6z"/><path transform="translate(33,74)" d="M0 0h5v1h-5zM2 1h1v1h-1zM2 2h1v1h-1zM2 3h1v1h-1zM2 4h1v1h-1zM2 5h1v1h-1zM2 6h1v1h-1zM0 7h5v1h-5z"/><path transform="translate(39,74)" d="M0 0h3v1h-3zM5 0h3v1h-3zM1 1h2v1h-2zM6 1h1v1h-1zM1 2h1v1h-1zM3 2h1v1h-1zM6 2h1v1h-1zM1 3h1v1h-1zM3 3h1v1h-1zM6 3h1v1h-1zM1 4h1v1h-1zM4 4h1v1h-1zM6 4h1v1h-1zM1 5h1v1h-1zM4 5h1v1h-1zM6 5h1v1h-1zM1 6h1v1h-1zM5 6h2v1h-2zM0 7h3v1h-3zM5 7h2v1h-2z"/><path transform="translate(48,74)" d="M0 0h6v1h-6zM1 1h1v1h-1zM5 1h1v1h-1zM1 2h1v1h-1zM3 2h1v1h-1zM1 3h3v1h-3zM1 4h1v1h-1zM3 4h1v1h-1zM1 5h1v1h-1zM1 6h1v1h-1zM5 6h1v1h-1zM0 7h6v1h-6z"/><use href="#g1" x="77" y="74"/><use href="#g2" x="100" y="74"/><use href="#g3" x="124" y="74"/><use href="#g4" x="148" y="74"/><use href="#g5" x="172" y="74"/><use href="#g6" x="196" y="74"/><use href="#g7" x="220" y="74"/><use href="#g8" x="244" y="74"/><use href="#g9" x="268" y="74"/><use href="#g1" x="292" y="74"/><use href="#g0" x="299" y="74"/><use href="#g1" x="323" y="74"/><use href="#g2" x="346" y="74"/><use href="#g3" x="370" y="74"/><use href="#g4" x="394" y="74"/><use href="#g5" x="418" y="74"/><use href="#g6" x="442" y="74"/><use href="#g7" x="466" y="74"/><use href="#g8" x="490" y="74"/><use href="#g9" x="514" y="74"/><use href="#g2" x="537" y="74"/><use href="#g0" x="545" y="74"/><use href="#g1" x="569" y="74"/><use href="#g2" x="592" y="74"/><use href="#g3" x="616" y="74"/><use href="#g4" x="640" y="74"/><use href="#g5" x="664" y="74"/><use href="#g6" x="688" y="74"/><use href="#g7" x="712" y="74"/><use href="#g8" x="736" y="74"/><use href="#g0" x="22" y="94"/><use href="#g0" x="30" y="94"/><use href="#g0" x="38" y="94"/><use href="#g1" x="47" y="94"/><use href="#g0" x="76" y="94"/><use href="#g0" x="100" y="94"/><use href="#g0" x="124" y="94"/><use href="#g0" x="148" y="94"/><use href="#g0" x="172" y="94"/><use href="#g0" x="196" y="94"/><use href="#g0" x="220" y="94"/><use href="#g0" x="244" y="94"/><use href="#g0" x="268" y="94"/><use href="#gL" x="295" y="94"/><use href="#gL" x="322" y="94"/><use href="#gL" x="346" y="94"/><use href="#gL" x="370" y="94"/><use href="#gG" x="394" y="94"/><use href="#gL" x="418" y="94"/><use href="#gL" x="442" y="94"/><use href="#gL" x="466" y="94"/><use href="#gL" x="490" y="94"/><use href="#g0" x="514" y="94"/><use href="#g0" x="541" y="94"/><use href="#g0" x="568" y="94"/><use href="#g0" x="592" y="94"/><use href="#g0" x="616" y="94"/><use href="#g0" x="640" y="94"/><use href="#g0" x="664" y="94"/><use href="#g0" x="688" y="94"/><use href="#g0" x="712" y="94"/><use href="#gV" x="735" y="94"/><use href="#g0" x="22" y="111"/><use href="#g0" x="30" y="111"/><use href="#g0" x="38" y="111"/><use href="#g2" x="46" y="111"/><use href="#g1" x="77" y="111"/><use href="#g0" x="100" y="111"/><use href="#g0" x="124" y="111"/><use href="#g0" x="148" y="111"/><use href="#g0" x="172" y="111"/><use href="#g0" x="196" y="111"/><use href="#g0" x="220" y="111"/><use href="#g0" x="244" y="111"/><use href="#g0" x="268" y="111"/><use href="#gL" x="295" y="111"/><use href="#gL" x="322" y="111"/><use href="#gL" x="346" y="111"/><use href="#gL" x="370" y="111"/><use href="#gG" x="394" y="111"/><use href="#gL" x="418" y="111"/><use href="#gL" x="442" y="111"/><use href="#gL" x="466" y="111"/><use href="#gL" x="490" y="111"/><use href="#g0" x="514" y="111"/><use href="#g0" x="541" y="111"/><use href="#g0" x="568" y="111"/><use href="#g0" x="592" y="111"/><use href="#g0" x="616" y="111"/><use href="#g0" x="640" y="111"/><use href="#g0" x="664" y="111"/><use href="#g0" x="688" y="111"/><use href="#g0" x="712" y="111"/><use href="#gV" x="735" y="111"/><use href="#g0" x="22" y="128"/><use href="#g0" x="30" y="128"/><use href="#g0" x="38" y="128"/><use href="#g3" x="46" y="128"/><use href="#g0" x="76" y="128"/><use href="#g1" x="101" y="128"/><use href="#g1" x="125" y="128"/><use href="#g1" x="149" y="128"/><use href="#g1" x="173" y="128"/><use href="#g1" x="197" y="128"/><use href="#g1" x="221" y="128"/><use href="#g1" x="245" y="128"/><use href="#g1" x="269" y="128"/><use href="#gL" x="295" y="128"/><use href="#gL" x="322" y="128"/><use href="#gL" x="346" y="128"/><use href="#gL" x="370" y="128"/><use href="#gG" x="394" y="128"/><use href="#gL" x="418" y="128"/><use href="#gL" x="442" y="128"/><use href="#gL" x="466" y="128"/><use href="#gL" x="490" y="128"/><use href="#g0" x="514" y="128"/><use href="#g1" x="542" y="128"/><use href="#g1" x="569" y="128"/><use href="#g1" x="593" y="128"/><use href="#g1" x="617" y="128"/><use href="#g1" x="641" y="128"/><use href="#g1" x="665" y="128"/><use href="#g1" x="689" y="128"/><use href="#g1" x="713" y="128"/><use href="#gV" x="735" y="128"/><use href="#g0" x="22" y="145"/><use href="#g0" x="30" y="145"/><use href="#g0" x="38" y="145"/><use href="#g4" x="46" y="145"/><use href="#g1" x="77" y="145"/><use href="#g1" x="101" y="145"/><use href="#g1" x="125" y="145"/><use href="#g1" x="149" y="145"/><use href="#g1" x="173" y="145"/><use href="#g1" x="197" y="145"/><use href="#g1" x="221" y="145"/><use href="#g1" x="245" y="145"/><use href="#g1" x="269" y="145"/><use href="#gL" x="295" y="145"/><use href="#gL" x="322" y="145"/><use href="#gL" x="346" y="145"/><use href="#gL" x="370" y="145"/><use href="#gG" x="394" y="145"/><use href="#gL" x="418" y="145"/><use href="#gL" x="442" y="145"/><use href="#gL" x="466" y="145"/><use href="#gL" x="490" y="145"/><use href="#g0" x="514" y="145"/><use href="#g1" x="542" y="145"/><use href="#g1" x="569" y="145"/><use href="#g1" x="593" y="145"/><use href="#g1" x="617" y="145"/><use href="#g1" x="641" y="145"/><use href="#g1" x="665" y="145"/><use href="#g1" x="689" y="145"/><use href="#g1" x="713" y="145"/><use href="#gV" x="735" y="145"/><use href="#g0" x="22" y="162"/><use href="#g0" x="30" y="162"/><use href="#g0" x="38" y="162"/><use href="#g5" x="46" y="162"/><use href="#g0" x="76" y="162"/><use href="#g0" x="100" y="162"/><use href="#g0" x="124" y="162"/><use href="#g0" x="148" y="162"/><use href="#g0" x="172" y="162"/><use href="#g0" x="196" y="162"/><use href="#g0" x="220" y="162"/><use href="#g0" x="244" y="162"/><use href="#g0" x="268" y="162"/><use href="#gZ" x="296" y="162"/><use href="#gZ" x="323" y="162"/><use href="#gZ" x="347" y="162"/><use href="#gZ" x="371" y="162"/><use href="#gG" x="394" y="162"/><use href="#gZ" x="419" y="162"/><use href="#gZ" x="443" y="162"/><use href="#gZ" x="467" y="162"/><use href="#gZ" x="491" y="162"/><use href="#g1" x="515" y="162"/><use href="#g0" x="541" y="162"/><use href="#g0" x="568" y="162"/><use href="#g0" x="592" y="162"/><use href="#g0" x="616" y="162"/><use href="#g0" x="640" y="162"/><use href="#g0" x="664" y="162"/><use href="#g0" x="688" y="162"/><use href="#g0" x="712" y="162"/><use href="#gV" x="735" y="162"/><use href="#g0" x="22" y="179"/><use href="#g0" x="30" y="179"/><use href="#g0" x="38" y="179"/><use href="#g6" x="46" y="179"/><use href="#g1" x="77" y="179"/><use href="#g0" x="100" y="179"/><use href="#g0" x="124" y="179"/><use href="#g0" x="148" y="179"/><use href="#g0" x="172" y="179"/><use href="#g0" x="196" y="179"/><use href="#g0" x="220" y="179"/><use href="#g0" x="244" y="179"/><use href="#g0" x="268" y="179"/><use href="#gZ" x="296" y="179"/><use href="#gZ" x="323" y="179"/><use href="#gZ" x="347" y="179"/><use href="#gZ" x="371" y="179"/><use href="#gG" x="394" y="179"/><use href="#gZ" x="419" y="179"/><use href="#gZ" x="443" y="179"/><use href="#gZ" x="467" y="179"/><use href="#gZ" x="491" y="179"/><use href="#g1" x="515" y="179"/><use href="#g0" x="541" y="179"/><use href="#g0" x="568" y="179"/><use href="#g0" x="592" y="179"/><use href="#g0" x="616" y="179"/><use href="#g0" x="640" y="179"/><use href="#g0" x="664" y="179"/><use href="#g0" x="688" y="179"/><use href="#g0" x="712" y="179"/><use href="#gV" x="735" y="179"/><use href="#g0" x="22" y="196"/><use href="#g0" x="30" y="196"/><use href="#g0" x="38" y="196"/><use href="#g7" x="46" y="196"/><use href="#g0" x="76" y="196"/><use href="#g1" x="101" y="196"/><use href="#g1" x="125" y="196"/><use href="#g1" x="149" y="196"/><use href="#g1" x="173" y="196"/><use href="#g1" x="197" y="196"/><use href="#g1" x="221" y="196"/><use href="#g1" x="245" y="196"/><use href="#g1" x="269" y="196"/><use href="#gZ" x="296" y="196"/><use href="#gZ" x="323" y="196"/><use href="#gZ" x="347" y="196"/><use href="#gZ" x="371" y="196"/><use href="#gG" x="394" y="196"/><use href="#gZ" x="419" y="196"/><use href="#gZ" x="443" y="196"/><use href="#gZ" x="467" y="196"/><use href="#gZ" x="491" y="196"/><use href="#g1" x="515" y="196"/><use href="#g1" x="542" y="196"/><use href="#g1" x="569" y="196"/><use href="#g1" x="593" y="196"/><use href="#g1" x="617" y="196"/><use href="#g1" x="641" y="196"/><use href="#g1" x="665" y="196"/><use href="#g1" x="689" y="196"/><use href="#g1" x="713" y="196"/><use href="#gV" x="735" y="196"/><use href="#g0" x="22" y="213"/><use href="#g0" x="30" y="213"/><use href="#g0" x="38" y="213"/><use href="#g8" x="46" y="213"/><use href="#g1" x="77" y="213"/><use href="#g1" x="101" y="213"/><use href="#g1" x="125" y="213"/><use href="#g1" x="149" y="213"/><use href="#g1" x="173" y="213"/><use href="#g1" x="197" y="213"/><use href="#g1" x="221" y="213"/><use href="#g1" x="245" y="213"/><use href="#g1" x="269" y="213"/><use href="#gZ" x="296" y="213"/><use href="#gZ" x="323" y="213"/><use href="#gZ" x="347" y="213"/><use href="#gZ" x="371" y="213"/><use href="#gG" x="394" y="213"/><use href="#gZ" x="419" y="213"/><use href="#gZ" x="443" y="213"/><use href="#gZ" x="467" y="213"/><use href="#gZ" x="491" y="213"/><use href="#g1" x="515" y="213"/><use href="#g1" x="542" y="213"/><use href="#g1" x="569" y="213"/><use href="#g1" x="593" y="213"/><use href="#g1" x="617" y="213"/><use href="#g1" x="641" y="213"/><use href="#g1" x="665" y="213"/><use href="#g1" x="689" y="213"/><use href="#g1" x="713" y="213"/><use href="#gV" x="735" y="213"/><use href="#g0" x="837" y="250"/><use href="#gV" x="1010" y="250"/><use href="#g0" x="837" y="272"/><use href="#g0" x="1011" y="272"/><use href="#g0" x="837" y="294"/><use href="#g0" x="1011" y="294"/><use href="#g0" x="837" y="316"/><use href="#g0" x="1011" y="316"/><use href="#g0" x="837" y="338"/><use href="#g0" x="1011" y="338"/><use href="#g0" x="837" y="360"/><use href="#g0" x="1011" y="360"/><use href="#g0" x="837" y="382"/><use href="#g0" x="1011" y="382"/><use href="#g0" x="837" y="404"/><use href="#g0" x="1011" y="404"/><use href="#g0" x="837" y="426"/><use href="#g0" x="1011" y="426"/><use href="#gL" x="837" y="448"/><use href="#g0" x="1011" y="448"/><use href="#gL" x="837" y="470"/><use href="#gL" x="1011" y="470"/><use href="#gL" x="837" y="492"/><use href="#gL" x="1011" y="492"/><use href="#gL" x="837" y="514"/><use href="#gL" x="1011" y="514"/><use href="#gG" x="837" y="536"/><use href="#gL" x="1011" y="536"/><use href="#s1" x="912" y="253"/><use href="#s2" x="964" y="253"/><use href="#s8" x="973" y="253"/><use href="#s2" x="912" y="275"/><use href="#s2" x="964" y="275"/><use href="#s7" x="973" y="275"/><use href="#s3" x="912" y="297"/><use href="#s2" x="964" y="297"/><use href="#s6" x="973" y="297"/><use href="#s4" x="912" y="319"/><use href="#s2" x="964" y="319"/><use href="#s5" x="973" y="319"/><use href="#s5" x="912" y="341"/><use href="#s2" x="964" y="341"/><use href="#s4" x="973" y="341"/><use href="#s6" x="912" y="363"/><use href="#s2" x="964" y="363"/><use href="#s3" x="973" y="363"/><use href="#s7" x="912" y="385"/><use href="#s2" x="964" y="385"/><use href="#s2" x="973" y="385"/><use href="#s8" x="912" y="407"/><use href="#s2" x="964" y="407"/><use href="#s1" x="973" y="407"/><use href="#s9" x="912" y="429"/><use href="#s2" x="964" y="429"/><use href="#s0" x="973" y="429"/><use href="#s1" x="912" y="451"/><use href="#s0" x="921" y="451"/><use href="#s1" x="964" y="451"/><use href="#s9" x="973" y="451"/><use href="#s1" x="912" y="473"/><use href="#s1" x="921" y="473"/><use href="#s1" x="964" y="473"/><use href="#s8" x="973" y="473"/><use href="#s1" x="912" y="495"/><use href="#s2" x="921" y="495"/><use href="#s1" x="964" y="495"/><use href="#s7" x="973" y="495"/><use href="#s1" x="912" y="517"/><use href="#s3" x="921" y="517"/><use href="#s1" x="964" y="517"/><use href="#s6" x="973" y="517"/><use href="#s1" x="912" y="539"/><use href="#s4" x="921" y="539"/><use href="#s1" x="964" y="539"/><use href="#s5" x="973" y="539"/></g></svg>
</body></html>
